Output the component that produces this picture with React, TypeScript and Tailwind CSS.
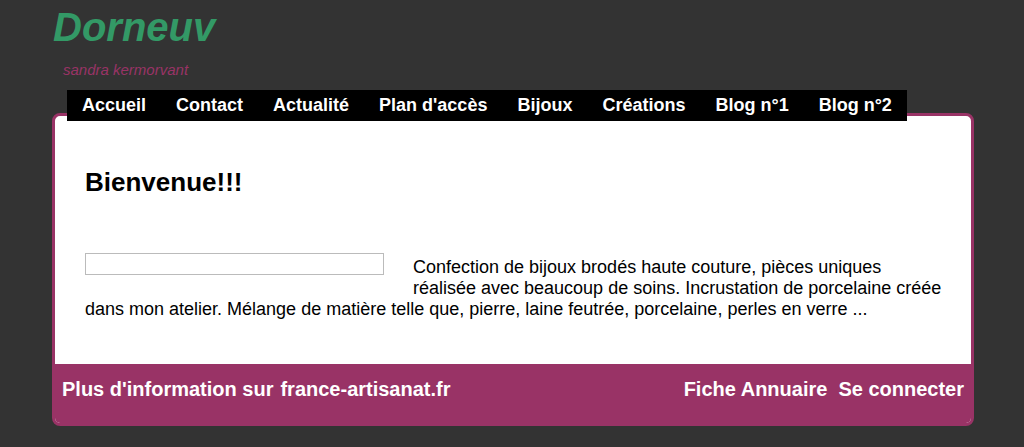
export default function App() {
  const nav = ['Accueil', 'Contact', 'Actualité', "Plan d'accès", 'Bijoux', 'Créations', 'Blog n°1', 'Blog n°2'];

  return (
    <div className="min-h-[447px] bg-[#333333] font-['Liberation_Sans',Arial,sans-serif]">
      <div className="ml-[52px] w-[922px] pt-[4px]">
        <div className="pl-[1px] text-[40px] font-bold italic leading-[46px] text-[#339966]">Dorneuv</div>
        <div className="mt-[11px] pl-[11px] text-[15px] italic leading-[17px] text-[#993366]">sandra kermorvant</div>

        <ul className="relative z-10 ml-[15px] mt-[12px] flex h-[31px] w-fit items-center bg-black">
          {nav.map((item) => (
            <li key={item} className="px-[15px] text-[18px] font-bold leading-[31px] text-white">
              {item}
            </li>
          ))}
        </ul>

        <div className="-mt-[8px] overflow-hidden rounded-[8px] border-[3px] border-[#993366] bg-white">
          <div className="pl-[30px] pr-[27px] pt-[51px] pb-[44px] text-black">
            <h1 className="text-[26px] font-bold leading-[30px]">Bienvenue!!!</h1>
            <div className="mt-[56px] text-[18px] leading-[21px]">
              <div className="float-left mr-[29px] mb-[6px] h-[22px] w-[299px] border border-[#bbbbbb]" />
              <p className="pt-[4px]">
                Confection de bijoux brodés haute couture, pièces uniques réalisée avec beaucoup de soins. Incrustation de
                porcelaine créée dans mon atelier. Mélange de matière telle que, pierre, laine feutrée, porcelaine, perles en
                verre ...
              </p>
            </div>
          </div>
          <div className="flex h-[59px] items-start justify-between bg-[#993366] px-[7px] pt-[14px] text-[20px] font-bold leading-[23px] text-white">
            <div className="flex gap-[7px]">
              <span>Plus d'information sur</span>
              <span>france-artisanat.fr</span>
            </div>
            <div className="flex gap-[11px]">
              <span>Fiche Annuaire</span>
              <span>Se connecter</span>
            </div>
          </div>
        </div>
      </div>
    </div>
  );
}
